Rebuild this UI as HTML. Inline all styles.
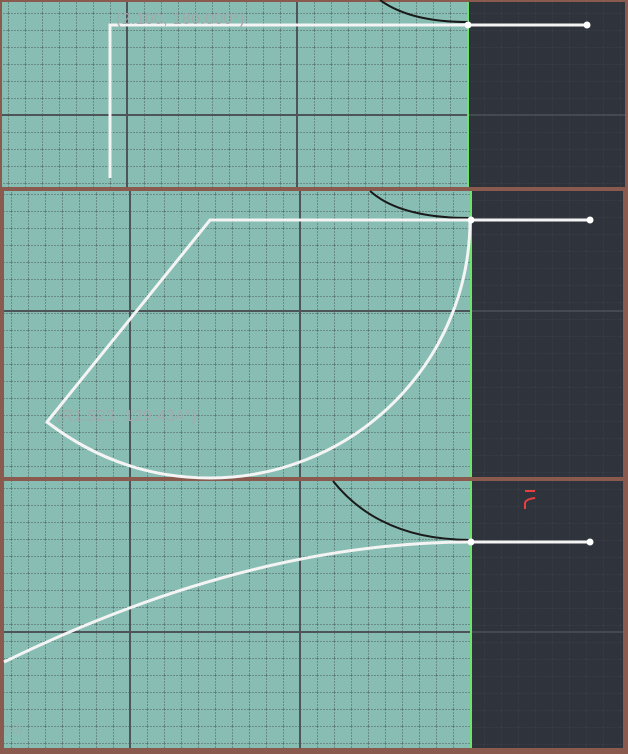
<!DOCTYPE html>
<html><head><style>
body{margin:0;width:628px;height:754px;overflow:hidden;background:#8a5a4e}
svg{display:block}
text{font-family:"Liberation Sans",sans-serif;font-size:16px;letter-spacing:0.3px;fill:#a2aaab}
</style></head><body>
<svg width="628" height="754" viewBox="0 0 628 754">
<defs>
<pattern id="g1" x="8" y="13" width="17" height="17" patternUnits="userSpaceOnUse">
<path d="M0 0V17M0 0H17" stroke="#4a5a5a" stroke-width="1" stroke-dasharray="2 1" fill="none"/>
</pattern>
<pattern id="g2" x="11" y="7" width="17" height="17" patternUnits="userSpaceOnUse">
<path d="M0 0V17M0 0H17" stroke="#4a5a5a" stroke-width="1" stroke-dasharray="2 1" fill="none"/>
</pattern>
<pattern id="g3" x="11" y="12" width="17" height="17" patternUnits="userSpaceOnUse">
<path d="M0 0V17M0 0H17" stroke="#4a5a5a" stroke-width="1" stroke-dasharray="2 1" fill="none"/>
</pattern>
<pattern id="d1" x="8" y="13" width="17" height="17" patternUnits="userSpaceOnUse">
<path d="M0 0V17M0 0H17" stroke="#3c4048" stroke-width="1" stroke-dasharray="2 1" fill="none"/>
</pattern>
</defs>
<rect x="2" y="2" width="466" height="185" fill="#88bdb4"/>
<rect x="2" y="2" width="466" height="185" fill="url(#g1)"/>
<rect x="468" y="2" width="157" height="185" fill="#2f333b"/>
<rect x="468" y="2" width="157" height="185" fill="url(#d1)"/>
<path d="M127 2V187M297 2V187M2 115H468" stroke="#4d5559" stroke-width="2"/>
<path d="M468 115H625" stroke="#454a52" stroke-width="2"/>
<path d="M468 2V187" stroke="#6ee36a" stroke-width="2"/>
<path d="M380 0 Q410 22 468 22" stroke="#1a1a1a" stroke-width="2" fill="none"/>
<path d="M110 178V25H587" stroke="#f4f4f4" stroke-width="3" fill="none"/>
<circle cx="468" cy="25" r="3.5" fill="#fff"/><circle cx="587" cy="25" r="3.5" fill="#fff"/>
<text x="116" y="24">(2.100, 180.000°)</text>
<rect x="4" y="191" width="467" height="286" fill="#88bdb4"/>
<rect x="4" y="191" width="467" height="286" fill="url(#g2)"/>
<rect x="471" y="191" width="152" height="286" fill="#2f333b"/>
<rect x="471" y="191" width="152" height="286" fill="url(#d1)"/>
<path d="M130 191V477M300 191V477M4 311H471" stroke="#4d5559" stroke-width="2"/>
<path d="M471 311H623" stroke="#454a52" stroke-width="2"/>
<path d="M471 191V477" stroke="#6ee36a" stroke-width="2"/>
<path d="M370 191 Q400 218 470 218" stroke="#1a1a1a" stroke-width="2" fill="none"/>
<path d="M590 220H210L47 422Q120 478 210 478A260 258 0 0 0 470 220" stroke="#f4f4f4" stroke-width="3" fill="none"/>
<circle cx="471" cy="220" r="3.5" fill="#fff"/><circle cx="590" cy="220" r="3.5" fill="#fff"/>
<text x="56" y="421">(R1.523, 129.434°)</text>
<rect x="4" y="481" width="467" height="267" fill="#88bdb4"/>
<rect x="4" y="481" width="467" height="267" fill="url(#g3)"/>
<rect x="471" y="481" width="152" height="267" fill="#2f333b"/>
<rect x="471" y="481" width="152" height="267" fill="url(#d1)"/>
<path d="M130 481V748M300 481V748M4 632H471" stroke="#4d5559" stroke-width="2"/>
<path d="M471 632H623" stroke="#454a52" stroke-width="2"/>
<path d="M471 481V748" stroke="#6ee36a" stroke-width="2"/>
<path d="M333 481 Q380 540 471 540" stroke="#1a1a1a" stroke-width="2" fill="none"/>
<path d="M4 662 Q250 542 471 542H590" stroke="#f4f4f4" stroke-width="3" fill="none"/>
<circle cx="471" cy="542" r="3.5" fill="#fff"/><circle cx="590" cy="542" r="3.5" fill="#fff"/>
<path d="M525 491h10M525 509v-6q1-4 10-5" stroke="#e84040" stroke-width="2" fill="none"/>
<text x="4" y="733" style="font-size:12px;letter-spacing:0">(-0)</text>
</svg>
</body></html>
